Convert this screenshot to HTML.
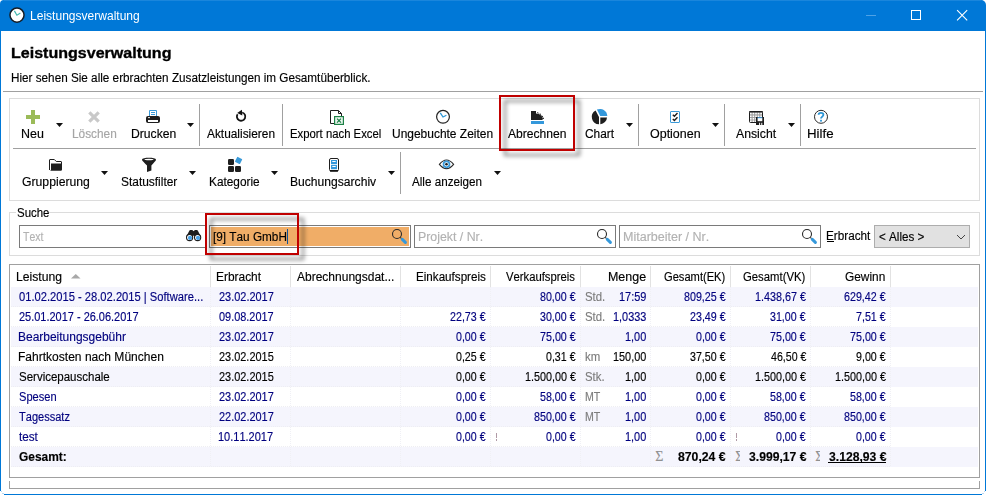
<!DOCTYPE html>
<html lang="de">
<head>
<meta charset="utf-8">
<title>Leistungsverwaltung</title>
<style>
html,body{margin:0;padding:0;background:#fff;}
body{width:986px;height:495px;position:relative;overflow:hidden;font-family:"Liberation Sans",sans-serif;font-size:12px;color:#000;}
.a{position:absolute;box-sizing:border-box;}
.t{position:absolute;white-space:nowrap;line-height:1;font-size:12px;transform-origin:0 0;font-kerning:none;-webkit-text-stroke:0.15px;}
.win{left:0;top:0;width:986px;height:495px;border:1px solid #0078d7;border-radius:5px;}
.tb{left:0;top:0;width:986px;height:31px;background:#0078d7;border-radius:4px 5px 0 0;}
.hl{background:#a0a0a0;height:1px;}
.vl{background:#a0a0a0;width:1px;}
.box{border:1px solid #dcdcdc;}
.inp{border:1px solid #7a7a7a;background:#fff;height:23px;top:225px;}
.red{border:2px solid #c00000;}
.sh{border:2px solid rgba(0,0,0,.55);filter:blur(2.2px);}
.band{left:11px;width:967px;height:20px;background:#f5f5fd;}
.hd{background:#e2e2e2;width:1px;top:266px;height:21px;}
.vd{width:1px;top:287px;height:180px;background-image:linear-gradient(#f0f0f5 50%,transparent 50%);background-size:1px 2px;}
.hd2{left:11px;width:880px;height:1px;background-image:linear-gradient(90deg,#eeeef3 50%,transparent 50%);background-size:2px 1px;}
</style>
</head>
<body>
<!-- window frame -->
<div class="a tb"></div>
<div class="a" style="left:4px;top:0;width:977px;height:1px;background:#1a86dc;"></div>
<div class="a" style="left:0;top:31px;width:1px;height:460px;background:#0078d7;"></div>
<div class="a" style="left:985px;top:31px;width:1px;height:460px;background:#0078d7;"></div>
<div class="a" style="left:4px;top:494px;width:978px;height:1px;background:#0078d7;"></div>
<div class="a" style="left:1px;top:491px;width:1px;height:1px;background:#b9d9f3;"></div><div class="a" style="left:2px;top:493px;width:2px;height:1px;background:#b9d9f3;"></div>
<div class="a" style="left:984px;top:491px;width:1px;height:1px;background:#b9d9f3;"></div><div class="a" style="left:982px;top:493px;width:2px;height:1px;background:#b9d9f3;"></div>

<!-- header separator -->
<div class="a hl" style="left:3px;top:91px;width:980px;"></div>

<!-- toolbar -->
<div class="a box" style="left:9px;top:98px;width:971px;height:103px;"></div>
<div class="a hl" style="left:13px;top:148px;width:963px;"></div>
<div class="a vl" style="left:199px;top:104px;height:42px;"></div>
<div class="a vl" style="left:282px;top:104px;height:42px;"></div>
<div class="a vl" style="left:638px;top:104px;height:42px;"></div>
<div class="a vl" style="left:724px;top:104px;height:42px;"></div>
<div class="a vl" style="left:800px;top:104px;height:42px;"></div>
<div class="a vl" style="left:400px;top:152px;height:42px;"></div>

<!-- search group -->
<div class="a box" style="left:9px;top:212px;width:971px;height:44px;"></div>
<div class="a" style="left:16px;top:208px;width:33px;height:10px;background:#fff;"></div>
<div class="a inp" style="left:19px;width:188px;"></div>
<div class="a inp" style="left:209px;width:202px;"><div class="a" style="left:1px;top:1px;width:198px;height:19px;background:#f0ad67;"></div></div>
<div class="a inp" style="left:414px;width:202px;"></div>
<div class="a inp" style="left:619px;width:202px;"></div>
<div class="a" style="left:874px;top:225px;width:96px;height:23px;border:1px solid #adadad;background:#e1e1e1;"></div>
<div class="a" style="left:287px;top:229px;width:1px;height:15px;background:#0f5298;"></div>
<div class="a" style="left:827px;top:241px;width:7px;height:1px;background:#000;"></div>

<!-- table -->
<div class="a" style="left:9px;top:264px;width:971px;height:214px;border:1px solid #a0a0a0;"></div>
<div class="a" style="left:9px;top:481px;width:971px;height:8px;border:1px solid #a0a0a0;border-top:none;"></div>
<div class="a band" style="top:287px;"></div>
<div class="a band" style="top:327px;"></div>
<div class="a band" style="top:367px;"></div>
<div class="a band" style="top:407px;"></div>
<div class="a band" style="top:447px;"></div>
<div class="a hd2" style="top:306px;"></div>
<div class="a hd2" style="top:326px;"></div>
<div class="a hd2" style="top:346px;"></div>
<div class="a hd2" style="top:366px;"></div>
<div class="a hd2" style="top:386px;"></div>
<div class="a hd2" style="top:406px;"></div>
<div class="a hd2" style="top:426px;"></div>
<div class="a hd2" style="top:446px;"></div>
<div class="a hd2" style="top:466px;"></div>
<div class="a hd" style="left:210px;"></div><div class="a hd" style="left:290px;"></div><div class="a hd" style="left:400px;"></div>
<div class="a hd" style="left:490px;"></div><div class="a hd" style="left:580px;"></div><div class="a hd" style="left:650px;"></div>
<div class="a hd" style="left:730px;"></div><div class="a hd" style="left:810px;"></div><div class="a hd" style="left:890px;"></div>
<div class="a vd" style="left:210px;"></div><div class="a vd" style="left:290px;"></div><div class="a vd" style="left:400px;"></div>
<div class="a vd" style="left:490px;"></div><div class="a vd" style="left:580px;"></div><div class="a vd" style="left:650px;"></div>
<div class="a vd" style="left:730px;"></div><div class="a vd" style="left:810px;"></div><div class="a vd" style="left:890px;"></div>

<div class="a" style="left:828px;top:462px;width:58px;height:1px;background:#000;"></div>
<!-- sigma + marks -->
<span class="t" style="font-family:'Liberation Serif',serif;font-size:14px;color:#8f8f8f;left:655.2px;top:450.3px;">&Sigma;</span>
<div class="a" style="left:735px;top:448px;width:5.4px;height:18px;overflow:hidden;"><span class="t" style="font-family:'Liberation Serif',serif;font-size:14px;color:#8f8f8f;left:0.2px;top:2.3px;">&Sigma;</span></div>
<div class="a" style="left:815px;top:448px;width:5.4px;height:18px;overflow:hidden;"><span class="t" style="font-family:'Liberation Serif',serif;font-size:14px;color:#8f8f8f;left:0.2px;top:2.3px;">&Sigma;</span></div>
<div class="a" style="left:496px;top:433px;width:1px;height:5px;background:#b09aa6;"></div><div class="a" style="left:496px;top:439px;width:1px;height:2px;background:#b09aa6;"></div>
<div class="a" style="left:736px;top:433px;width:1px;height:5px;background:#b09aa6;"></div><div class="a" style="left:736px;top:439px;width:1px;height:2px;background:#b09aa6;"></div>
<!-- icons -->
<svg class="a" style="left:0;top:0;" width="986" height="495" viewBox="0 0 986 495">
<!-- title bar -->
<circle cx="17" cy="15.1" r="7.05" fill="#fff" stroke="#151c24" stroke-width="1.5"/>
<polyline points="14.4,10.9 16.9,15.2 20.4,13.1" fill="none" stroke="#45b8b0" stroke-width="1.2"/>
<line x1="866" y1="15.5" x2="876" y2="15.5" stroke="#4ea2e6" stroke-width="1"/>
<rect x="911.5" y="10.5" width="9" height="9" fill="none" stroke="#fff" stroke-width="1"/>
<path d="M957.1,10.2 L967.2,20.3 M967.2,10.2 L957.1,20.3" stroke="#fff" stroke-width="1.1" fill="none"/>

<!-- dropdown arrows -->
<g fill="#111">
<polygon points="56,123 63,123 59.5,127"/>
<polygon points="187,123 194,123 190.5,127"/>
<polygon points="626,123 633,123 629.5,127"/>
<polygon points="712,123 719,123 715.5,127"/>
<polygon points="788,123 795,123 791.5,127"/>
<polygon points="101,171 108,171 104.5,175"/>
<polygon points="189,171 196,171 192.5,175"/>
<polygon points="271,171 278,171 274.5,175"/>
<polygon points="388,171 395,171 391.5,175"/>
<polygon points="494,171 501,171 497.5,175"/>
</g>

<!-- Neu: plus -->
<path d="M31,110 h4 v5 h5 v4 h-5 v5 h-4 v-5 h-5 v-4 h5 z" fill="#9bbb59"/>
<!-- Löschen: X -->
<path d="M89.3,112.3 L98.7,121.7 M98.7,112.3 L89.3,121.7" stroke="#c9c9c9" stroke-width="3.2" fill="none"/>
<!-- Drucken -->
<path d="M149.5,116.5 V110.5 H156.5 V116.5" fill="#fff" stroke="#3a9ad9" stroke-width="1"/>
<path d="M151,112.5 H155 M151,114.5 H155" stroke="#3a9ad9" stroke-width="1"/>
<rect x="146" y="116" width="14" height="7" rx="2" fill="#1e1e1e"/>
<rect x="148" y="120" width="10" height="2" fill="#fff"/>
<rect x="148" y="117.2" width="2" height="0.9" fill="#fff"/>
<!-- Aktualisieren -->
<path d="M242.2,112.5 A4.2,4.2 0 1 1 237.6,114.2" fill="none" stroke="#111" stroke-width="1.8"/>
<polygon points="237.2,112.9 241.9,109.8 242.3,115.6" fill="#111"/>
<!-- Excel -->
<path d="M330.5,110.5 H338.5 L341.5,113.5 V123.5 H330.5 Z" fill="#fff" stroke="#1e1e1e" stroke-width="1"/>
<path d="M338.5,110.5 V113.5 H341.5" fill="none" stroke="#1e1e1e" stroke-width="1"/>
<rect x="334.6" y="116.6" width="8.8" height="7.8" fill="#eef7f1" stroke="#1c8146" stroke-width="1.2"/>
<path d="M337,118.6 L341,122.6 M341,118.6 L337,122.6" stroke="#1c8146" stroke-width="1.3" fill="none"/>
<!-- Ungebuchte Zeiten: clock -->
<circle cx="443" cy="116.8" r="6.4" fill="#fff" stroke="#222" stroke-width="1.2"/>
<polyline points="440.3,112.8 443,117 446.4,115.2" fill="none" stroke="#2b95d6" stroke-width="1.3"/>
<!-- Abrechnen -->
<path d="M531,111 H536 V113.4 C540,113.6 542.5,116 543,119 L542.2,120 H531 Z" fill="#1e1e1e"/>
<path d="M537.2,112.6 L538.6,113.2 M539.8,113.7 L541,114.6 M541.8,115.6 L542.8,116.9 M543.2,117.6 L543.5,119" stroke="#1e1e1e" stroke-width="1" fill="none"/>
<rect x="531" y="121" width="13" height="3" fill="#3498db"/>
<!-- Chart pie -->
<path d="M599,117 L595.6,110.6 A7.3,7.3 0 0 0 599,124.3 Z" fill="#1e1e1e"/>
<path d="M600.3,117.4 H607 A7.3,7.3 0 0 1 600.3,124.3 Z" fill="#1e1e1e"/>
<path d="M600.2,116 L596.9,109.6 A7.3,7.3 0 0 1 607.3,116 Z" fill="#3498db"/>
<!-- Optionen -->
<rect x="670.5" y="111.5" width="9" height="11" rx="0.5" fill="#fff" stroke="#3a9ad9" stroke-width="1"/>
<polyline points="672.8,114.7 674.4,116.2 677.5,113" fill="none" stroke="#1e1e1e" stroke-width="1.4"/>
<polyline points="672.8,118.9 674.4,120.4 677.5,117.2" fill="none" stroke="#1e1e1e" stroke-width="1.4"/>
<!-- Ansicht -->
<rect x="749.5" y="111.5" width="13" height="11" rx="1" fill="#9a9a9a" stroke="#1e1e1e" stroke-width="1"/>
<rect x="749.3" y="111" width="13.4" height="1.5" fill="#1e1e1e"/>
<rect x="750.0" y="112.8" width="1.6" height="1.6" fill="#fff"/><rect x="752.6" y="112.8" width="1.6" height="1.6" fill="#fff"/><rect x="755.2" y="112.8" width="1.6" height="1.6" fill="#fff"/><rect x="757.7" y="112.8" width="1.6" height="1.6" fill="#fff"/><rect x="760.3" y="112.8" width="1.6" height="1.6" fill="#fff"/><rect x="750.0" y="115.5" width="1.6" height="1.6" fill="#fff"/><rect x="752.6" y="115.5" width="1.6" height="1.6" fill="#fff"/><rect x="755.2" y="115.5" width="1.6" height="1.6" fill="#fff"/><rect x="757.7" y="115.5" width="1.6" height="1.6" fill="#fff"/><rect x="760.3" y="115.5" width="1.6" height="1.6" fill="#fff"/><rect x="750.0" y="118.0" width="1.6" height="1.6" fill="#fff"/><rect x="752.6" y="118.0" width="1.6" height="1.6" fill="#fff"/><rect x="755.2" y="118.0" width="1.6" height="1.6" fill="#fff"/><rect x="757.7" y="118.0" width="1.6" height="1.6" fill="#fff"/><rect x="760.3" y="118.0" width="1.6" height="1.6" fill="#fff"/><rect x="750.0" y="120.4" width="1.6" height="1.6" fill="#fff"/><rect x="752.6" y="120.4" width="1.6" height="1.6" fill="#fff"/><rect x="755.2" y="120.4" width="1.6" height="1.6" fill="#fff"/><rect x="757.7" y="120.4" width="1.6" height="1.6" fill="#fff"/><rect x="760.3" y="120.4" width="1.6" height="1.6" fill="#fff"/>
<rect x="756" y="117" width="8" height="8" fill="#1e1e1e"/>
<rect x="757.6" y="118" width="4.7" height="3.2" fill="#fff"/>
<rect x="757.6" y="117.2" width="4.7" height="1" fill="#4da6e8"/>
<rect x="759" y="122.8" width="1.1" height="2.2" fill="#e6e6e6"/>
<rect x="761.2" y="122.8" width="1.1" height="2.2" fill="#e6e6e6"/>
<!-- Hilfe -->
<circle cx="821" cy="116.8" r="6.5" fill="#fff" stroke="#2a2a2a" stroke-width="1"/>
<path d="M818.6,114.8 C818.6,112.2 823.4,112.2 823.4,114.8 C823.4,116.6 821,116.6 821,118.6" fill="none" stroke="#2b95d6" stroke-width="1.8"/>
<rect x="820.1" y="119.8" width="1.8" height="1.8" fill="#2b95d6"/>

<!-- Gruppierung: folder -->
<path d="M49.5,170 V160 Q49.5,159.5 50,159.5 H54.3 L56.3,161.5 H61 Q61.5,161.5 61.5,162 V164" fill="#fff" stroke="#1e1e1e" stroke-width="1"/>
<path d="M51,163.4 H62 V169.5 Q62,170.8 60.8,170.8 H50 Q51,170.6 51,169.6 Z" fill="#1e1e1e"/>
<!-- Statusfilter: funnel -->
<path d="M142,159.8 C142,157.2 156,157.2 156,159.8 C156,160.8 154,162.5 151.4,165.6 V170.6 L147,172 V165.6 C144,162.5 142,160.8 142,159.8 Z" fill="#1e1e1e"/>
<ellipse cx="149" cy="159.5" rx="4.6" ry="0.8" fill="#fff"/>
<!-- Kategorie -->
<rect x="228" y="159" width="6" height="6" rx="1.2" fill="#1e1e1e"/>
<rect x="228" y="166" width="6" height="6" rx="1.2" fill="#1e1e1e"/>
<rect x="235" y="166" width="6" height="6" rx="1.2" fill="#1e1e1e"/>
<rect x="235.8" y="157.6" width="5.6" height="5.6" rx="0.6" fill="#3a9ad9" transform="rotate(27 238.6 160.4)"/>
<!-- Buchungsarchiv -->
<rect x="329.5" y="158.5" width="9" height="12.5" rx="1.5" fill="#fff" stroke="#1e1e1e" stroke-width="1"/>
<rect x="331" y="160" width="6" height="4.2" fill="#3498db"/>
<rect x="331" y="165" width="6" height="4.2" fill="#3498db"/>
<rect x="332.3" y="161" width="3.4" height="1" fill="#fff"/>
<rect x="332.3" y="166" width="3.4" height="1" fill="#fff"/>
<rect x="330" y="170" width="8" height="1.6" fill="#111"/>
<!-- Alle anzeigen: eye -->
<path d="M439.4,164.3 Q446.5,155.6 453.6,164.3 Q446.5,173 439.4,164.3 Z" fill="#fff" stroke="#2a2a2a" stroke-width="1.1"/>
<circle cx="446.5" cy="164.3" r="3" fill="#fff" stroke="#3a9ad9" stroke-width="1.7"/>
<circle cx="446.5" cy="164.3" r="1.3" fill="#1e1e1e"/>

<!-- binoculars -->
<path d="M186.4,236.4 L189.3,230.8 Q189.6,230.1 190.4,230.1 H192.3 L193.6,231.3 L194.9,230.1 H196.8 Q197.6,230.1 197.9,230.8 L200.8,236.4 L197.6,239 L193.6,235.6 L189.6,239 Z" fill="#1e1e1e"/>
<circle cx="189.6" cy="237.5" r="3.1" fill="#fff" stroke="#1e1e1e" stroke-width="1.1"/>
<circle cx="197.6" cy="237.5" r="3.1" fill="#fff" stroke="#1e1e1e" stroke-width="1.1"/>
<circle cx="190" cy="237.9" r="2.1" fill="#4aa3e8"/>
<circle cx="198" cy="237.9" r="2.1" fill="#4aa3e8"/>
<!-- magnifiers -->
<g>
<circle cx="397" cy="234" r="4.5" fill="none" stroke="#2a2a2a" stroke-width="1.1"/>
<line x1="400.3" y1="237.4" x2="401.6" y2="238.7" stroke="#2a2a2a" stroke-width="1.1"/>
<line x1="402.3" y1="239.4" x2="405.4" y2="242.4" stroke="#3498db" stroke-width="3" stroke-linecap="round"/>
</g>
<g transform="translate(205,0)">
<circle cx="397" cy="234" r="4.5" fill="none" stroke="#2a2a2a" stroke-width="1.1"/>
<line x1="400.3" y1="237.4" x2="401.6" y2="238.7" stroke="#2a2a2a" stroke-width="1.1"/>
<line x1="402.3" y1="239.4" x2="405.4" y2="242.4" stroke="#3498db" stroke-width="3" stroke-linecap="round"/>
</g>
<g transform="translate(410,0)">
<circle cx="397" cy="234" r="4.5" fill="none" stroke="#2a2a2a" stroke-width="1.1"/>
<line x1="400.3" y1="237.4" x2="401.6" y2="238.7" stroke="#2a2a2a" stroke-width="1.1"/>
<line x1="402.3" y1="239.4" x2="405.4" y2="242.4" stroke="#3498db" stroke-width="3" stroke-linecap="round"/>
</g>

<!-- combo chevron -->
<polyline points="957,235 961,239 965,235" fill="none" stroke="#444" stroke-width="1"/>
<!-- sort arrow -->
<polygon points="71,278.5 80.5,278.5 75.75,274" fill="#a8a8a8"/>

</svg>

<span class="t" style="left:30.01px;top:10.14px;transform:scaleX(1.0033);color:#fff;-webkit-text-stroke:0;">Leistungsverwaltung</span>
<span class="t" style="left:10.73px;top:44.58px;transform:scaleX(1.0350);font-size:15.5px;font-weight:700;-webkit-text-stroke:0.35px;">Leistungsverwaltung</span>
<span class="t" style="left:10.54px;top:71.84px;transform:scaleX(0.9765);">Hier sehen Sie alle erbrachten Zusatzleistungen im Gesamtüberblick.</span>
<span class="t" style="left:21.48px;top:127.84px;transform:scaleX(1.0379);">Neu</span>
<span class="t" style="left:71.53px;top:127.84px;transform:scaleX(0.9861);color:#a6a6a6;">Löschen</span>
<span class="t" style="left:130.50px;top:127.84px;transform:scaleX(1.0135);">Drucken</span>
<span class="t" style="left:207.18px;top:127.84px;transform:scaleX(0.9897);">Aktualisieren</span>
<span class="t" style="left:289.77px;top:127.84px;transform:scaleX(0.9439);">Export nach Excel</span>
<span class="t" style="left:392.08px;top:127.84px;transform:scaleX(0.9970);">Ungebuchte Zeiten</span>
<span class="t" style="left:507.98px;top:127.84px;transform:scaleX(1.0080);">Abrechnen</span>
<span class="t" style="left:584.80px;top:127.84px;transform:scaleX(0.9914);">Chart</span>
<span class="t" style="left:650.01px;top:127.84px;transform:scaleX(1.0390);">Optionen</span>
<span class="t" style="left:735.98px;top:127.84px;transform:scaleX(1.0194);">Ansicht</span>
<span class="t" style="left:807.41px;top:127.84px;transform:scaleX(1.1072);">Hilfe</span>
<span class="t" style="left:21.69px;top:175.84px;transform:scaleX(1.0179);">Gruppierung</span>
<span class="t" style="left:120.66px;top:175.84px;transform:scaleX(0.9938);">Statusfilter</span>
<span class="t" style="left:208.83px;top:175.84px;transform:scaleX(0.9869);">Kategorie</span>
<span class="t" style="left:290.41px;top:175.84px;transform:scaleX(1.0088);">Buchungsarchiv</span>
<span class="t" style="left:412.28px;top:175.84px;transform:scaleX(0.9712);">Alle anzeigen</span>
<span class="t" style="left:16.78px;top:207.34px;transform:scaleX(0.9530);">Suche</span>
<span class="t" style="left:23.37px;top:230.84px;transform:scaleX(0.8703);color:#b2b2b2;">Text</span>
<span class="t" style="left:212.96px;top:230.84px;transform:scaleX(0.9806);">[9] Tau GmbH</span>
<span class="t" style="left:417.99px;top:230.84px;transform:scaleX(1.0283);color:#b2b2b2;">Projekt / Nr.</span>
<span class="t" style="left:622.97px;top:230.84px;transform:scaleX(1.0422);color:#b2b2b2;">Mitarbeiter / Nr.</span>
<span class="t" style="left:826.34px;top:229.84px;transform:scaleX(0.9779);">Erbracht</span>
<span class="t" style="left:879.03px;top:231.14px;transform:scaleX(0.9711);">< Alles ></span>
<span class="t" style="left:16.30px;top:270.84px;transform:scaleX(1.0158);">Leistung</span>
<span class="t" style="left:216.02px;top:270.84px;transform:scaleX(0.9937);">Erbracht</span>
<span class="t" style="left:297.28px;top:270.84px;transform:scaleX(1.0002);">Abrechnungsdat...</span>
<span class="t" style="left:415.55px;top:270.84px;transform:scaleX(0.9700);">Einkaufspreis</span>
<span class="t" style="left:506.45px;top:270.84px;transform:scaleX(0.9399);">Verkaufspreis</span>
<span class="t" style="left:607.98px;top:270.84px;transform:scaleX(1.0377);">Menge</span>
<span class="t" style="left:663.94px;top:270.84px;transform:scaleX(0.9279);">Gesamt(EK)</span>
<span class="t" style="left:743.03px;top:270.84px;transform:scaleX(0.9433);">Gesamt(VK)</span>
<span class="t" style="left:844.90px;top:270.84px;transform:scaleX(0.9897);">Gewinn</span>
<span class="t" style="left:18.86px;top:290.84px;transform:scaleX(0.9309);color:#00007f;">01.02.2015 - 28.02.2015 | Software...</span>
<span class="t" style="left:218.65px;top:290.84px;transform:scaleX(0.9125);color:#00007f;">23.02.2017</span>
<span class="t" style="left:539.94px;top:290.84px;transform:scaleX(0.8896);color:#00007f;">80,00 €</span>
<span class="t" style="left:584.88px;top:290.84px;transform:scaleX(0.9490);color:#7c7c7c;">Std.</span>
<span class="t" style="left:618.97px;top:290.84px;transform:scaleX(0.9108);color:#00007f;">17:59</span>
<span class="t" style="left:684.14px;top:290.84px;transform:scaleX(0.8909);color:#00007f;">809,25 €</span>
<span class="t" style="left:755.08px;top:290.84px;transform:scaleX(0.8987);color:#00007f;">1.438,67 €</span>
<span class="t" style="left:844.26px;top:290.84px;transform:scaleX(0.8926);color:#00007f;">629,42 €</span>
<span class="t" style="left:18.75px;top:310.84px;transform:scaleX(0.9138);color:#00007f;">25.01.2017 - 26.06.2017</span>
<span class="t" style="left:218.77px;top:310.84px;transform:scaleX(0.9104);color:#00007f;">09.08.2017</span>
<span class="t" style="left:450.06px;top:310.84px;transform:scaleX(0.8914);color:#00007f;">22,73 €</span>
<span class="t" style="left:539.99px;top:310.84px;transform:scaleX(0.8881);color:#00007f;">30,00 €</span>
<span class="t" style="left:584.88px;top:310.84px;transform:scaleX(0.9490);color:#7c7c7c;">Std.</span>
<span class="t" style="left:612.97px;top:310.84px;transform:scaleX(0.9075);color:#00007f;">1,0333</span>
<span class="t" style="left:690.06px;top:310.84px;transform:scaleX(0.8914);color:#00007f;">23,49 €</span>
<span class="t" style="left:770.49px;top:310.84px;transform:scaleX(0.8881);color:#00007f;">31,00 €</span>
<span class="t" style="left:856.25px;top:310.84px;transform:scaleX(0.8902);color:#00007f;">7,51 €</span>
<span class="t" style="left:18.32px;top:330.84px;transform:scaleX(0.9981);color:#00007f;">Bearbeitungsgebühr</span>
<span class="t" style="left:218.65px;top:330.84px;transform:scaleX(0.9125);color:#00007f;">23.02.2017</span>
<span class="t" style="left:456.18px;top:330.84px;transform:scaleX(0.8862);color:#00007f;">0,00 €</span>
<span class="t" style="left:539.85px;top:330.84px;transform:scaleX(0.8917);color:#00007f;">75,00 €</span>
<span class="t" style="left:624.97px;top:330.84px;transform:scaleX(0.9102);color:#00007f;">1,00</span>
<span class="t" style="left:696.18px;top:330.84px;transform:scaleX(0.8862);color:#00007f;">0,00 €</span>
<span class="t" style="left:770.35px;top:330.84px;transform:scaleX(0.8917);color:#00007f;">75,00 €</span>
<span class="t" style="left:850.25px;top:330.84px;transform:scaleX(0.8917);color:#00007f;">75,00 €</span>
<span class="t" style="left:18.31px;top:350.84px;transform:scaleX(1.0031);">Fahrtkosten nach München</span>
<span class="t" style="left:218.65px;top:350.84px;transform:scaleX(0.9109);">23.02.2015</span>
<span class="t" style="left:456.18px;top:350.84px;transform:scaleX(0.8862);">0,25 €</span>
<span class="t" style="left:545.98px;top:350.84px;transform:scaleX(0.8862);">0,31 €</span>
<span class="t" style="left:584.63px;top:350.84px;transform:scaleX(0.9516);color:#7c7c7c;">km</span>
<span class="t" style="left:612.97px;top:350.84px;transform:scaleX(0.9060);">150,00</span>
<span class="t" style="left:690.19px;top:350.84px;transform:scaleX(0.8881);">37,50 €</span>
<span class="t" style="left:770.66px;top:350.84px;transform:scaleX(0.8840);">46,50 €</span>
<span class="t" style="left:856.30px;top:350.84px;transform:scaleX(0.8887);">9,00 €</span>
<span class="t" style="left:18.78px;top:370.84px;transform:scaleX(0.9579);">Servicepauschale</span>
<span class="t" style="left:218.65px;top:370.84px;transform:scaleX(0.9109);">23.02.2015</span>
<span class="t" style="left:456.18px;top:370.84px;transform:scaleX(0.8862);">0,00 €</span>
<span class="t" style="left:524.58px;top:370.84px;transform:scaleX(0.8987);">1.500,00 €</span>
<span class="t" style="left:584.88px;top:370.84px;transform:scaleX(0.9458);color:#7c7c7c;">Stk.</span>
<span class="t" style="left:624.97px;top:370.84px;transform:scaleX(0.9102);">1,00</span>
<span class="t" style="left:696.18px;top:370.84px;transform:scaleX(0.8862);">0,00 €</span>
<span class="t" style="left:755.08px;top:370.84px;transform:scaleX(0.8987);">1.500,00 €</span>
<span class="t" style="left:834.98px;top:370.84px;transform:scaleX(0.8987);">1.500,00 €</span>
<span class="t" style="left:18.80px;top:390.84px;transform:scaleX(0.9244);color:#00007f;">Spesen</span>
<span class="t" style="left:218.65px;top:390.84px;transform:scaleX(0.9125);color:#00007f;">23.02.2017</span>
<span class="t" style="left:456.18px;top:390.84px;transform:scaleX(0.8862);color:#00007f;">0,00 €</span>
<span class="t" style="left:539.97px;top:390.84px;transform:scaleX(0.8886);color:#00007f;">58,00 €</span>
<span class="t" style="left:584.53px;top:390.84px;transform:scaleX(0.8838);color:#7c7c7c;">MT</span>
<span class="t" style="left:624.97px;top:390.84px;transform:scaleX(0.9102);color:#00007f;">1,00</span>
<span class="t" style="left:696.18px;top:390.84px;transform:scaleX(0.8862);color:#00007f;">0,00 €</span>
<span class="t" style="left:770.47px;top:390.84px;transform:scaleX(0.8886);color:#00007f;">58,00 €</span>
<span class="t" style="left:850.37px;top:390.84px;transform:scaleX(0.8886);color:#00007f;">58,00 €</span>
<span class="t" style="left:19.05px;top:410.84px;transform:scaleX(0.9194);color:#00007f;">Tagessatz</span>
<span class="t" style="left:218.65px;top:410.84px;transform:scaleX(0.9125);color:#00007f;">22.02.2017</span>
<span class="t" style="left:456.18px;top:410.84px;transform:scaleX(0.8862);color:#00007f;">0,00 €</span>
<span class="t" style="left:533.94px;top:410.84px;transform:scaleX(0.8909);color:#00007f;">850,00 €</span>
<span class="t" style="left:584.53px;top:410.84px;transform:scaleX(0.8838);color:#7c7c7c;">MT</span>
<span class="t" style="left:624.97px;top:410.84px;transform:scaleX(0.9102);color:#00007f;">1,00</span>
<span class="t" style="left:696.18px;top:410.84px;transform:scaleX(0.8862);color:#00007f;">0,00 €</span>
<span class="t" style="left:764.44px;top:410.84px;transform:scaleX(0.8909);color:#00007f;">850,00 €</span>
<span class="t" style="left:844.34px;top:410.84px;transform:scaleX(0.8909);color:#00007f;">850,00 €</span>
<span class="t" style="left:19.12px;top:430.84px;transform:scaleX(0.9752);color:#00007f;">test</span>
<span class="t" style="left:218.36px;top:430.84px;transform:scaleX(0.9173);color:#00007f;">10.11.2017</span>
<span class="t" style="left:456.18px;top:430.84px;transform:scaleX(0.8862);color:#00007f;">0,00 €</span>
<span class="t" style="left:545.98px;top:430.84px;transform:scaleX(0.8862);color:#00007f;">0,00 €</span>
<span class="t" style="left:624.97px;top:430.84px;transform:scaleX(0.9102);color:#00007f;">1,00</span>
<span class="t" style="left:696.18px;top:430.84px;transform:scaleX(0.8862);color:#00007f;">0,00 €</span>
<span class="t" style="left:776.48px;top:430.84px;transform:scaleX(0.8862);color:#00007f;">0,00 €</span>
<span class="t" style="left:856.38px;top:430.84px;transform:scaleX(0.8862);color:#00007f;">0,00 €</span>
<span class="t" style="left:18.81px;top:450.84px;transform:scaleX(0.9942);font-weight:700;">Gesamt:</span>
<span class="t" style="left:678.21px;top:450.84px;transform:scaleX(1.0191);font-weight:700;">870,24 €</span>
<span class="t" style="left:748.62px;top:450.84px;transform:scaleX(1.0137);font-weight:700;">3.999,17 €</span>
<span class="t" style="left:828.52px;top:450.84px;transform:scaleX(1.0137);font-weight:700;">3.128,93 €</span>
<!-- red annotation boxes -->
<div class="a sh" style="left:504px;top:100px;width:76px;height:56px;"></div>
<div class="a red" style="left:499px;top:95px;width:76px;height:56px;"></div>
<div class="a sh" style="left:210px;top:218px;width:94px;height:42px;"></div>
<div class="a red" style="left:205px;top:213px;width:94px;height:42px;"></div>

</body>
</html>
